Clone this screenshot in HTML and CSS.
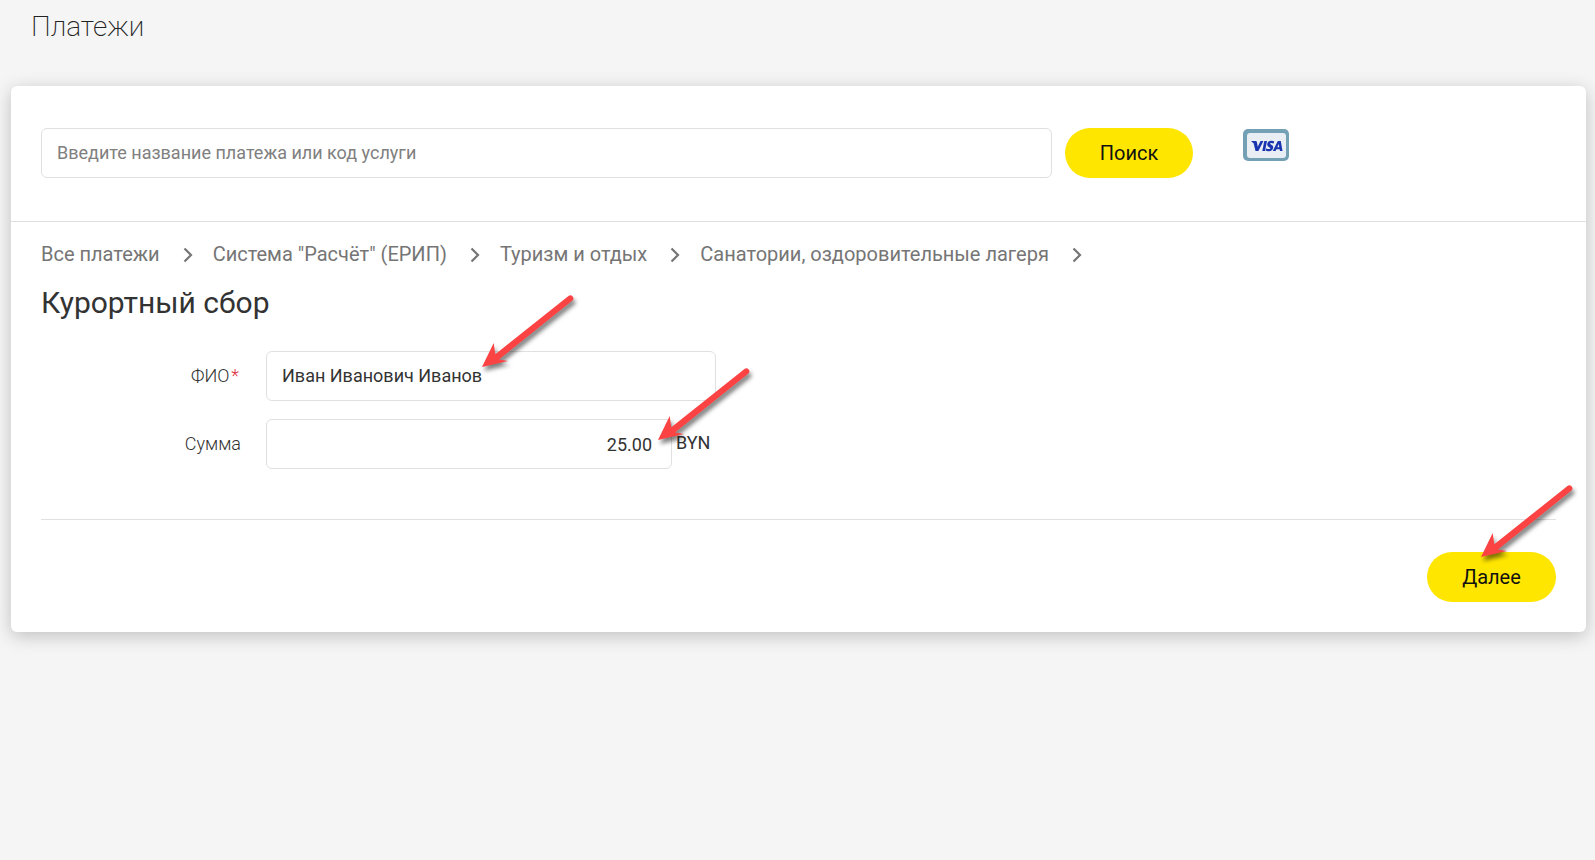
FILE: index.html
```html
<!DOCTYPE html>
<html lang="ru">
<head>
<meta charset="utf-8">
<meta name="viewport" content="width=device-width, initial-scale=1">
<title>Платежи</title>
<link rel="stylesheet" href="styles.css">
</head>
<body>
<svg class="defs" aria-hidden="true">
  <symbol id="chevron" viewBox="0 0 10 16"><path d="M1.5 1.5 8 8l-6.500 6.500" fill="none" stroke="currentColor" stroke-width="2.200"/></symbol>
  <symbol id="arrow" viewBox="0 0 110 90">
    <path d="M6 79 17.700 55 19.300 66.300 92.500 7.900A3.100 3.100 0 0 1 96.500 12.600L23 71.500 32 73Z" fill="#fb4344"/>
  </symbol>
</svg>
<header class="page-header"><h1 class="page-title">Платежи</h1></header>
<main class="card">
  <form class="search">
    <input class="field search-input" type="text" aria-label="Поиск платежа" placeholder="Введите название платежа или код услуги">
    <button class="button" type="button">Поиск</button>
    <div class="cards">
      <svg class="visa" viewBox="0 0 46 32" role="img" aria-label="VISA">
        <rect width="46" height="32" rx="5" fill="#73a0b5"/>
        <rect x="4" y="4" width="39" height="25" rx="3" fill="#e8eef3"/>
        <g fill="#1a35b0">
          <path d="M8.500 12h4.200q1 0 1.200 1l.9 4.700 2.700-5.700h2.900l-5 10h-2.900l-1.900-7.800q-.6-1-2.200-1.500z"/>
          <path d="M21.300 12h2.700l-2 10h-2.700z"/>
          <path d="M31.200 12.300l-.5 2.100q-3.400-1-3.700.2 0 .6 1.300 1.200 2.300 1 1.900 3.200-.7 3.400-4.700 3.200-1.800 0-2.900-.6l.5-2.200q3.700 1.400 4.200 0 .1-.6-1.200-1.200-2.300-1.100-1.900-3.200.7-3.300 4.400-3.200 1.600 0 2.600.5z"/>
          <path fill-rule="evenodd" d="M35.300 12h2.500l1.700 10h-2.500l-.3-1.700h-3.200l-.9 1.700h-2.800l4.600-9.300q.3-.7.900-.7zm.5 2.900-1.500 3.400h2z"/>
        </g>
      </svg>
    </div>
  </form>
  <section class="payment">
    <nav class="breadcrumbs" aria-label="Разделы">
      <a href="#">Все платежи</a><svg class="chevron"><use href="#chevron"/></svg>
      <a href="#">Система "Расчёт" (ЕРИП)</a><svg class="chevron"><use href="#chevron"/></svg>
      <a href="#">Туризм и отдых</a><svg class="chevron"><use href="#chevron"/></svg>
      <a href="#">Санатории, оздоровительные лагеря</a><svg class="chevron"><use href="#chevron"/></svg>
    </nav>
    <h2 class="payment-title">Курортный сбор</h2>
    <form class="form">
      <div class="row">
        <label class="label" for="name">ФИО<span class="required">*</span></label>
        <div class="control">
          <input class="field" id="name" type="text" value="Иван Иванович Иванов">
          <svg class="arrow arrow-name" aria-hidden="true"><use href="#arrow"/></svg>
        </div>
      </div>
      <div class="row">
        <label class="label" for="amount">Сумма</label>
        <div class="control">
          <input class="field amount" id="amount" type="text" inputmode="decimal" value="25.00">
          <span class="currency">BYN</span>
          <svg class="arrow arrow-amount" aria-hidden="true"><use href="#arrow"/></svg>
        </div>
      </div>
      <div class="actions">
        <div class="next">
          <button class="button" type="button">Далее</button>
          <svg class="arrow arrow-next" aria-hidden="true"><use href="#arrow"/></svg>
        </div>
      </div>
    </form>
  </section>
</main>
</body>
</html>
```
FILE: styles.css
```css
* { box-sizing: border-box; }
body {
  margin: 0;
  min-height: 100vh;
  background: #f5f5f5;
  color: #333;
  font-family: Roboto, "Noto Sans", sans-serif;
  font-size: 18px;
}
.defs { position: absolute; width: 0; height: 0; }
.page-header { height: 86px; padding: 8px 31px 0; }
.page-title { margin: 0; font-size: 28px; line-height: 38px; font-weight: 200; color: #222; }
.card {
  margin: 0 9px 0 11px;
  background: #fff;
  border-radius: 6px;
  box-shadow: 0 4px 18px rgba(0, 0, 0, .22);
}
.search {
  display: flex;
  align-items: flex-start;
  padding: 42px 30px 43px;
  border-bottom: 1px solid #e0e0e0;
}
.field {
  width: 100%;
  min-width: 0;
  height: 50px;
  padding: 0 15px 2px;
  border: 1px solid #e0e0e0;
  border-radius: 6px;
  background: #fff;
  color: #333;
  font: inherit;
}
.field::placeholder { color: #808080; opacity: 1; }
.search-input { flex: 1; margin-right: 13px; }
.button {
  width: 128px;
  height: 50px;
  padding: 0;
  border: 0;
  border-radius: 25px;
  background: #ffe600;
  color: #111;
  font: inherit;
  font-size: 20px;
}
.cards { width: 363px; padding: 1px 0 0 50px; }
.visa { display: block; width: 46px; height: 32px; }
.payment { padding: 19px 30px 30px; }
.breadcrumbs {
  display: flex;
  align-items: center;
  font-size: 20px;
  line-height: 26px;
  color: #757575;
}
.breadcrumbs a { color: inherit; text-decoration: none; }
.chevron { width: 10px; height: 16px; margin: 2px 20px 0 23px; }
.payment-title { margin: 15px 0 27px; font-size: 30px; line-height: 42px; font-weight: 400; }
.row { display: flex; align-items: center; margin-bottom: 18px; }
.label { width: 200px; margin-right: 25px; padding-bottom: 2px; text-align: right; font-weight: 300; }
.required { margin: 0 2px; color: #e03040; }
.control { position: relative; display: flex; align-items: center; width: 450px; }
.amount { width: 406px; padding: 0 19px 0 15px; text-align: right; }
.currency { margin-left: 4px; padding-bottom: 3px; }
.actions {
  display: flex;
  justify-content: flex-end;
  margin-top: 50px;
  padding-top: 32px;
  border-top: 1px solid #e0e0e0;
}
.next { position: relative; }
.next .button { width: 129px; }
.arrow {
  position: absolute;
  width: 110px;
  height: 90px;
  overflow: visible;
  pointer-events: none;
  filter: drop-shadow(2px 4px 2px rgba(0, 0, 0, .5));
}
.arrow-name { left: 210px; top: -63px; }
.arrow-amount { left: 386px; top: -58px; }
.arrow-next { left: 48px; top: -74px; }
```
